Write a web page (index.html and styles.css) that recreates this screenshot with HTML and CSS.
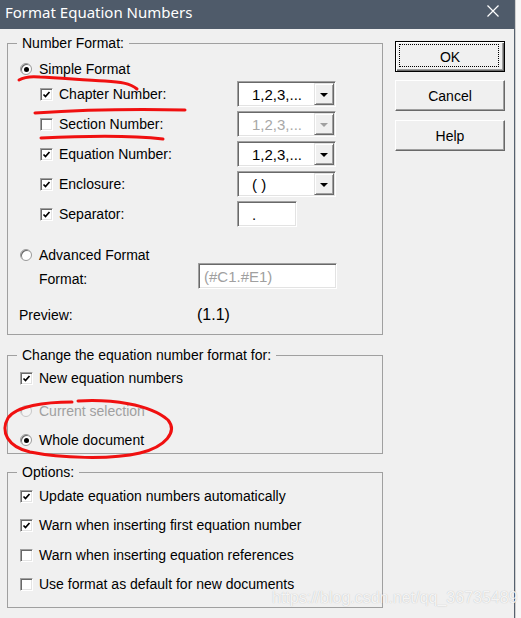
FILE: index.html
```html
<!DOCTYPE html>
<html>
<head>
<meta charset="utf-8">
<link rel="stylesheet" href="styles.css">
</head>
<body>
<div class="screen">
  <div class="dialog">
    <div class="titlebar">
      <span class="title">Format Equation Numbers</span>
      <svg class="close" width="12" height="12" viewBox="0 0 12 12"><path d="M0.5 0.5 L11.5 11.5 M11.5 0.5 L0.5 11.5" stroke="#fff" stroke-width="1.2" fill="none"/></svg>
    </div>
    <div class="dlg-body">
      <div class="left-col">
        <fieldset class="group g1">
          <legend>Number Format:</legend>
          <div class="row r-simple"><span class="radio checked"></span><span>Simple Format</span></div>
          <div class="row r-dd first">
            <div class="cell-lbl"><span class="cb"><svg width="11" height="11" viewBox="0 0 11 11"><path d="M2.5 5.5 L4.5 7.5 L8.5 3" stroke="#000" stroke-width="1.7" fill="none"/></svg></span><span>Chapter Number:</span></div>
            <div class="dd"><span class="dd-text">1,2,3,...</span><span class="dd-btn"><span class="arrow"></span></span></div>
          </div>
          <div class="row r-dd">
            <div class="cell-lbl"><span class="cb"></span><span>Section Number:</span></div>
            <div class="dd disabled"><span class="dd-text">1,2,3,...</span><span class="dd-btn"><span class="arrow"></span></span></div>
          </div>
          <div class="row r-dd">
            <div class="cell-lbl"><span class="cb"><svg width="11" height="11" viewBox="0 0 11 11"><path d="M2.5 5.5 L4.5 7.5 L8.5 3" stroke="#000" stroke-width="1.7" fill="none"/></svg></span><span>Equation Number:</span></div>
            <div class="dd"><span class="dd-text">1,2,3,...</span><span class="dd-btn"><span class="arrow"></span></span></div>
          </div>
          <div class="row r-dd">
            <div class="cell-lbl"><span class="cb"><svg width="11" height="11" viewBox="0 0 11 11"><path d="M2.5 5.5 L4.5 7.5 L8.5 3" stroke="#000" stroke-width="1.7" fill="none"/></svg></span><span>Enclosure:</span></div>
            <div class="dd"><span class="dd-text">( )</span><span class="dd-btn"><span class="arrow"></span></span></div>
          </div>
          <div class="row r-dd">
            <div class="cell-lbl"><span class="cb"><svg width="11" height="11" viewBox="0 0 11 11"><path d="M2.5 5.5 L4.5 7.5 L8.5 3" stroke="#000" stroke-width="1.7" fill="none"/></svg></span><span>Separator:</span></div>
            <div class="tb sep"><span class="dd-text">.</span></div>
          </div>
          <div class="row r-adv"><span class="radio"></span><span>Advanced Format</span></div>
          <div class="row r-format">
            <span class="fmt-lbl">Format:</span>
            <div class="tb fmt"><span class="fmt-text">(#C1.#E1)</span></div>
          </div>
          <div class="row r-preview">
            <span class="prev-lbl">Preview:</span>
            <span class="prev-val">(1.1)</span>
          </div>
        </fieldset>

        <fieldset class="group g2">
          <legend>Change the equation number format for:</legend>
          <div class="row opt r-new"><span class="cb"><svg width="11" height="11" viewBox="0 0 11 11"><path d="M2.5 5.5 L4.5 7.5 L8.5 3" stroke="#000" stroke-width="1.7" fill="none"/></svg></span><span>New equation numbers</span></div>
          <div class="row opt-r r-cur"><span class="radio disabled"></span><span class="dim">Current selection</span></div>
          <div class="row opt-r r-whole"><span class="radio checked"></span><span>Whole document</span></div>
        </fieldset>

        <fieldset class="group g3">
          <legend>Options:</legend>
          <div class="row opt o1"><span class="cb"><svg width="11" height="11" viewBox="0 0 11 11"><path d="M2.5 5.5 L4.5 7.5 L8.5 3" stroke="#000" stroke-width="1.7" fill="none"/></svg></span><span>Update equation numbers automatically</span></div>
          <div class="row opt o2"><span class="cb"><svg width="11" height="11" viewBox="0 0 11 11"><path d="M2.5 5.5 L4.5 7.5 L8.5 3" stroke="#000" stroke-width="1.7" fill="none"/></svg></span><span>Warn when inserting first equation number</span></div>
          <div class="row opt o3"><span class="cb"></span><span>Warn when inserting equation references</span></div>
          <div class="row opt o4"><span class="cb"></span><span>Use format as default for new documents</span></div>
        </fieldset>
      </div>

      <div class="btn-col">
        <div class="btn default">OK</div>
        <div class="btn b-cancel">Cancel</div>
        <div class="btn b-help">Help</div>
      </div>
    </div>
  </div>
  <div class="edge"></div>

  <svg class="annot" width="521" height="618" viewBox="0 0 521 618">
    <g fill="none" stroke="#f01010" stroke-width="3" stroke-linecap="round" stroke-linejoin="round">
      <path d="M19 80 C24 77 30 76 40 77 C60 78 85 80 105 81 C120 82 130 83 137 89"/>
      <path d="M35 113 C80 110 140 109 185 110"/>
      <path d="M41 138 C80 136 130 135 163 139"/>
      <path d="M78 401 C110 399 150 404 168 420 C178 432 165 447 140 453 C110 460 60 458 30 452 C8 447 0 432 8 418 C16 406 45 402 72 402"/>
    </g>
  </svg>
  <div class="watermark">https://blog.csdn.net/qq_36735489</div>
</div>
</body>
</html>
```

FILE: styles.css
```css
* { box-sizing: border-box; }

html, body {
  margin: 0;
  padding: 0;
}

body {
  width: 521px;
  height: 618px;
  overflow: hidden;
  font-family: "Liberation Sans", Arial, sans-serif;
  font-size: 14px;
  color: #000;
  background: #fdfdfd;
}

.screen {
  position: relative;
  display: flex;
  width: 521px;
  height: 618px;
}

.dialog {
  width: 515px;
  height: 618px;
  border-right: 1px solid #56616f;
  display: flex;
  flex-direction: column;
  background: #f0f0f0;
}

.titlebar {
  height: 29px;
  background: #4f5b6a;
  display: flex;
  align-items: flex-start;
  padding-left: 5px;
}

.title {
  font-family: "Noto Sans", "Open Sans", sans-serif;
  font-size: 15px;
  line-height: 22px;
  color: #fff;
  margin-top: 1px;
}

.close {
  margin-left: auto;
  margin-right: 15px;
  margin-top: 5px;
}

.dlg-body {
  flex: 1;
  display: flex;
  padding: 6px 0 0 7px;
}

.left-col {
  width: 376px;
  display: flex;
  flex-direction: column;
}

.group {
  margin: 0;
  padding: 0;
  border: 1px solid #a0a0a0;
  min-width: 0;
  width: 376px;
}

.group legend {
  margin-left: 9px;
  padding: 0 5px;
  line-height: 17px;
  font-size: 14px;
}

.row {
  display: flex;
  align-items: center;
}

/* group 1 */
.g1 { padding-bottom: 9px; }

.r-simple {
  height: 20px;
  margin-top: 7px;
  padding-left: 12px;
  gap: 7px;
}

.r-dd {
  display: grid;
  grid-template-columns: 229px auto;
  align-items: center;
  height: 30px;
}

.r-dd.first { margin-top: 0; }

.cell-lbl {
  display: flex;
  align-items: center;
  padding-left: 32px;
  gap: 6px;
}

.r-adv {
  height: 18px;
  margin-top: 17px;
  padding-left: 12px;
  gap: 7px;
}

.r-format {
  height: 25px;
  display: grid;
  grid-template-columns: 190px auto;
  align-items: center;
}

.fmt-lbl {
  padding-left: 31px;
  padding-top: 4px;
}

.r-preview {
  height: 20px;
  margin-top: 16px;
  display: grid;
  grid-template-columns: 189px auto;
  align-items: center;
}

.prev-lbl { padding-left: 11px; }

.prev-val { font-size: 16px; }

/* controls */
.cb {
  width: 13px;
  height: 13px;
  flex: none;
  background: #fff;
  border: 1px solid;
  border-color: #a0a0a0 #fff #fff #a0a0a0;
  box-shadow: inset 1px 1px 0 #696969, inset -1px -1px 0 #e3e3e3;
  display: flex;
  align-items: center;
  justify-content: center;
}

.cb svg { display: block; }

.radio {
  width: 12px;
  height: 12px;
  flex: none;
  border-radius: 50%;
  background: #fff;
  border: 1px solid #9a9a9a;
  box-shadow: inset 1px 1px 0 #6a6a6a;
  display: flex;
  align-items: center;
  justify-content: center;
}

.radio.checked::after {
  content: "";
  width: 5px;
  height: 5px;
  border-radius: 50%;
  background: #000;
}

.radio.disabled {
  background: #f4f4f4;
  border-color: #c8c8c8;
  box-shadow: inset 1px 1px 0 #b4b4b4;
}

.dim { color: #a0a0a0; }

.dd, .tb {
  height: 26px;
  background: #fff;
  border: 1px solid;
  border-color: #a0a0a0 #fff #fff #a0a0a0;
  box-shadow: inset 1px 1px 0 #696969, inset -1px -1px 0 #e3e3e3;
  padding: 1px;
  display: flex;
  align-items: center;
}

.dd { width: 99px; }

.dd-text {
  flex: 1;
  padding-left: 13px;
  font-size: 15px;
}

.dd.disabled .dd-text { color: #a8a8a8; }

.dd-btn {
  width: 20px;
  height: 22px;
  background: #f0f0f0;
  border: 1px solid;
  border-color: #e3e3e3 #696969 #696969 #e3e3e3;
  box-shadow: inset 1px 1px 0 #fff, inset -1px -1px 0 #a0a0a0;
  display: flex;
  align-items: center;
  justify-content: center;
}

.arrow {
  width: 0;
  height: 0;
  border-left: 4px solid transparent;
  border-right: 4px solid transparent;
  border-top: 4px solid #000;
  margin-top: 1px;
}

.dd.disabled .arrow { border-top-color: #a0a0a0; }

.tb.sep { width: 60px; }

.tb.fmt { width: 139px; height: 26px; margin-top: -1px; }

.fmt-text {
  padding-left: 4px;
  font-size: 15px;
  color: #a0a0a0;
}

/* group 2 */
.g2 {
  margin-top: 12px;
  padding-bottom: 3px;
}

.opt {
  height: 20px;
  padding-left: 12px;
  gap: 6px;
}

.opt-r {
  height: 20px;
  padding-left: 12px;
  gap: 7px;
}

.r-new { margin-top: 4px; }
.r-cur { margin-top: 13px; }
.r-whole { margin-top: 9px; }

/* group 3 */
.g3 {
  margin-top: 10px;
  padding-bottom: 13px;
}

.o1 { margin-top: 5px; }
.o2 { margin-top: 9px; }
.o3 { margin-top: 10px; }
.o4 { margin-top: 9px; }

/* buttons */
.btn-col {
  margin-left: 12px;
  padding-top: 6px;
  display: flex;
  flex-direction: column;
  width: 110px;
}

.btn {
  position: relative;
  width: 110px;
  height: 31px;
  background: #f0f0f0;
  border: 1px solid;
  border-color: #fff #696969 #696969 #fff;
  box-shadow: inset -1px -1px 0 #a0a0a0;
  display: flex;
  align-items: center;
  justify-content: center;
  font-size: 14px;
}

.btn.default {
  border: 1px solid #000;
  box-shadow: inset 1px 1px 0 #fff, inset -1px -1px 0 #696969, inset -2px -2px 0 #a0a0a0;
}

.btn.default::after {
  content: "";
  position: absolute;
  top: 2px;
  left: 3px;
  right: 5px;
  bottom: 4px;
  border: 1px dotted #000;
}

.b-cancel { margin-top: 8px; }
.b-help { margin-top: 9px; }

/* right edge strip */
.edge {
  flex: 1;
  border-left: 1px solid #cfcfcf;
  background: #f7f7f7;
}

/* overlays */
.annot {
  position: absolute;
  left: 0;
  top: 0;
  pointer-events: none;
}

.watermark {
  position: absolute;
  left: 272px;
  top: 589px;
  font-family: "Liberation Sans", Arial, sans-serif;
  font-size: 16px;
  color: rgba(255, 255, 255, 0.85);
  text-shadow: 0 0 1px rgba(0, 0, 0, 0.25);
  white-space: nowrap;
}
```
